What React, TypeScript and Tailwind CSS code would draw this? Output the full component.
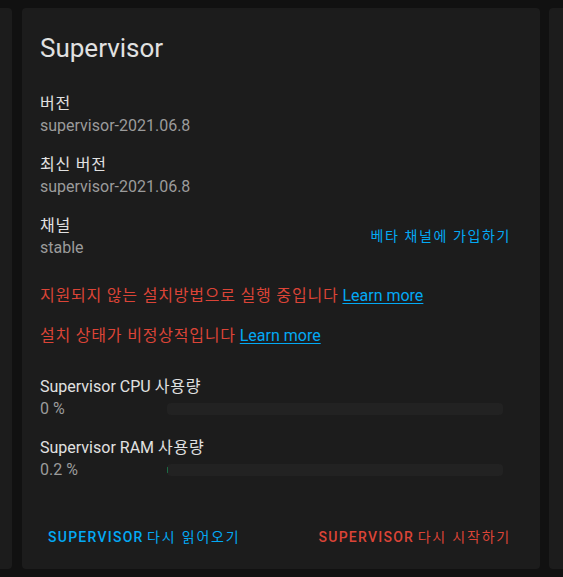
import React from "react";

const FONT = "font-['Roboto','Noto_Sans_CJK_KR',sans-serif]";

const INFO_ROWS = [
  { label: "버전", value: "supervisor-2021.06.8" },
  { label: "최신 버전", value: "supervisor-2021.06.8" },
  { label: "채널", value: "stable", action: "베타 채널에 가입하기" },
];

const USAGE = [
  { name: "Supervisor CPU", value: "0 %", pct: 0 },
  { name: "Supervisor RAM", value: "0.2 %", pct: 0.2 },
];

const WARNINGS = ["지원되지 않는 설치방법으로 실행 중입니다", "설치 상태가 비정상적입니다"];

function ActionButton({ latin, korean, color }: { latin: string; korean: string; color: string }) {
  return (
    <button className={`h-9 px-2 text-[14px] leading-9 ${color}`}>
      <span className="font-medium tracking-[1.25px]">{latin}</span>{" "}
      <span className="font-normal tracking-[1.8px]">{korean}</span>
    </button>
  );
}

export default function App() {
  return (
    <div className={`${FONT} h-[577px] w-[563px] overflow-hidden bg-[#111111] pt-2 flex`}>
      <div className="w-[12px] h-[561px] rounded-r bg-[#1c1c1c] shrink-0" />

      <div className="ml-[10px] w-[518px] h-[561px] rounded bg-[#1c1c1c] flex flex-col shrink-0">
        <div className="px-[18px] pt-6">
          <h1 className="text-[26px] leading-8 text-[#e1e1e1]">Supervisor</h1>

          <div className="mt-[20px]">
            {INFO_ROWS.map((row) => (
              <div key={row.label} className="h-[61px] pt-2 pb-[9px] flex items-center justify-between">
                <div className="flex flex-col">
                  <span className="text-[16px] leading-6 tracking-[0.8px] text-[#e1e1e1]">{row.label}</span>
                  <span className="text-[16px] leading-5 text-[#9b9b9b]">{row.value}</span>
                </div>
                {row.action && (
                  <button className="h-9 px-2 mr-[3px] text-[14px] tracking-[1.6px] text-[#03a9f4]">
                    {row.action}
                  </button>
                )}
              </div>
            ))}
          </div>

          <div className="mt-[17px] flex flex-col gap-4">
            {WARNINGS.map((w) => (
              <p key={w} className="text-[16px] leading-6 text-[#db4437]">
                <span className="tracking-[0.8px]">{w}</span>{" "}
                <a className="text-[#03a9f4] underline underline-offset-2">Learn more</a>
              </p>
            ))}
          </div>

          <div className="mt-[27px] flex flex-col gap-[17px]">
            {USAGE.map((u) => (
              <div key={u.name} className="flex flex-col">
                <span className="text-[16px] leading-6 text-[#e1e1e1]">
                  {u.name} <span className="tracking-[0.8px]">사용량</span>
                </span>
                <div className="h-5 flex items-center">
                  <span className="w-[127px] text-[16px] leading-5 text-[#9b9b9b]">{u.value}</span>
                  <div className="flex-1 mr-[19px] h-3 rounded bg-[#222222] overflow-hidden flex">
                    {u.pct > 0 && <div className="w-px my-[3px] bg-[#1b6b44]" />}
                  </div>
                </div>
              </div>
            ))}
          </div>
        </div>

        <div className="mt-auto pl-[18px] pr-[21px] pb-[14px] flex items-center justify-between">
          <ActionButton latin="SUPERVISOR" korean="다시 읽어오기" color="text-[#03a9f4]" />
          <ActionButton latin="SUPERVISOR" korean="다시 시작하기" color="text-[#db4437]" />
        </div>
      </div>

      <div className="ml-[9px] w-[20px] h-[561px] rounded-l bg-[#1c1c1c] shrink-0" />
    </div>
  );
}
